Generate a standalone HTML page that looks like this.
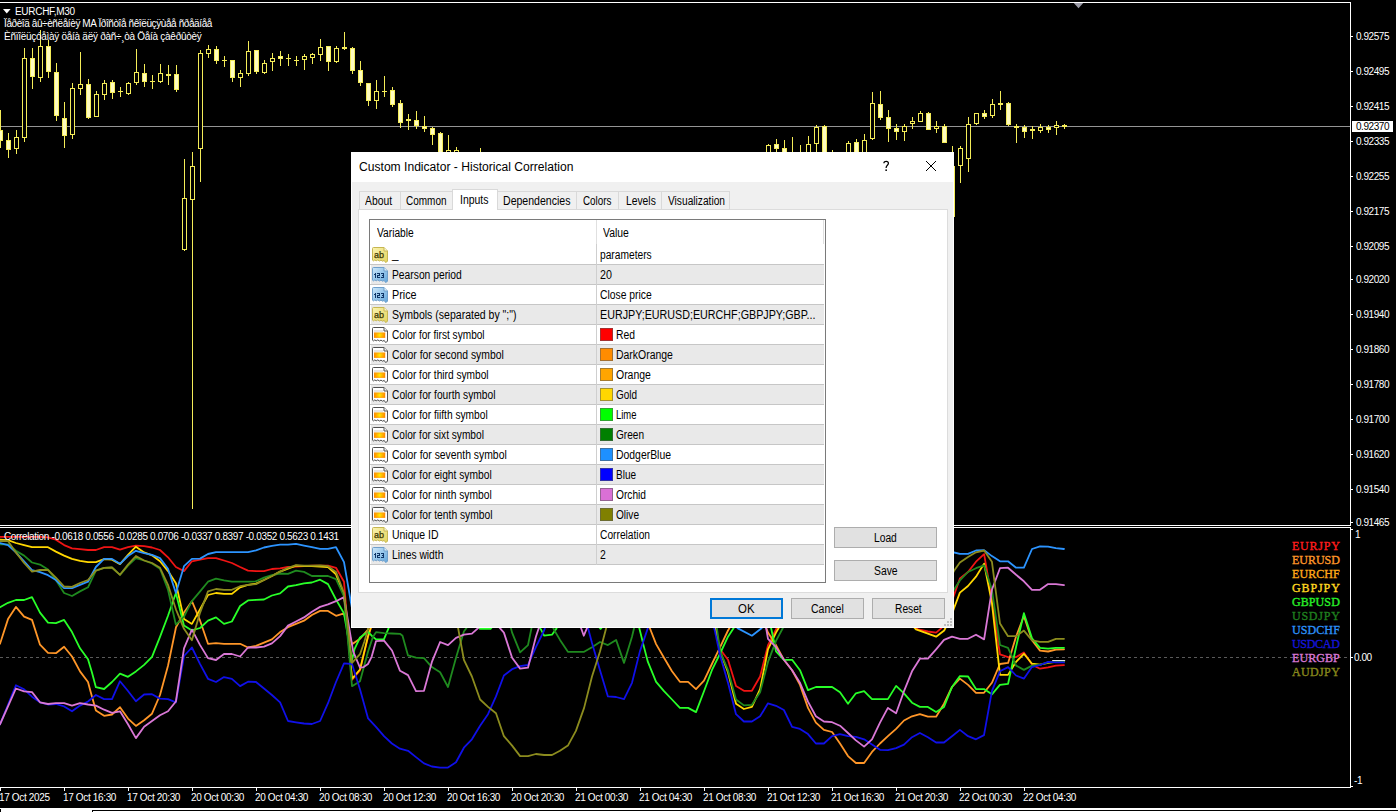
<!DOCTYPE html>
<html><head><meta charset="utf-8"><title>EURCHF,M30</title>
<style>
html,body{margin:0;padding:0;background:#000;}
body{width:1398px;height:812px;overflow:hidden;position:relative;font-family:"Liberation Sans",sans-serif;}
.ax{position:absolute;color:#fff;font-size:10px;line-height:12px;letter-spacing:-0.45px;white-space:nowrap;}
.pbox{position:absolute;width:41px;height:11px;background:#fff;}
.tm{position:absolute;color:#fff;font-size:10px;line-height:12px;letter-spacing:-0.35px;white-space:nowrap;}
.ct{position:absolute;color:#fff;font-size:10px;line-height:12px;letter-spacing:-0.2px;white-space:nowrap;}
.sy{position:absolute;font-family:"Liberation Serif",serif;font-size:12px;line-height:14px;white-space:nowrap;}
.edge{position:absolute;background:#fff;}

#dlg .t{position:absolute;white-space:nowrap;transform-origin:0 50%;display:block;}
#dlg .ic{position:absolute;}

</style></head><body>
<svg width="1398" height="812" viewBox="0 0 1398 812" style="position:absolute;left:0;top:0">
<g shape-rendering="crispEdges">
<rect x="0" y="126" width="1351" height="1" fill="#949494"/>
<rect x="0" y="110" width="1" height="38" fill="#f4ec58"/>
<rect x="-2" y="130" width="5" height="11" fill="#f4ec58"/>
<rect x="-1" y="131" width="3" height="9" fill="#fffcc0"/>
<rect x="8" y="133" width="1" height="25" fill="#f4ec58"/>
<rect x="6" y="140" width="5" height="10" fill="#f4ec58"/>
<rect x="7" y="141" width="3" height="8" fill="#fffcc0"/>
<rect x="16" y="130" width="1" height="24" fill="#f4ec58"/>
<rect x="14" y="137" width="5" height="12" fill="#f4ec58"/>
<rect x="15" y="138" width="3" height="10" fill="#000"/>
<rect x="24" y="48" width="1" height="94" fill="#f4ec58"/>
<rect x="22" y="58" width="5" height="80" fill="#f4ec58"/>
<rect x="23" y="59" width="3" height="78" fill="#000"/>
<rect x="32" y="48" width="1" height="41" fill="#f4ec58"/>
<rect x="30" y="58" width="5" height="19" fill="#f4ec58"/>
<rect x="31" y="59" width="3" height="17" fill="#fffcc0"/>
<rect x="40" y="30" width="1" height="52" fill="#f4ec58"/>
<rect x="38" y="46" width="5" height="32" fill="#f4ec58"/>
<rect x="39" y="47" width="3" height="30" fill="#000"/>
<rect x="48" y="40" width="1" height="38" fill="#f4ec58"/>
<rect x="46" y="46" width="5" height="26" fill="#f4ec58"/>
<rect x="47" y="47" width="3" height="24" fill="#fffcc0"/>
<rect x="56" y="63" width="1" height="58" fill="#f4ec58"/>
<rect x="54" y="72" width="5" height="44" fill="#f4ec58"/>
<rect x="55" y="73" width="3" height="42" fill="#fffcc0"/>
<rect x="64" y="102" width="1" height="46" fill="#f4ec58"/>
<rect x="62" y="118" width="5" height="18" fill="#f4ec58"/>
<rect x="63" y="119" width="3" height="16" fill="#fffcc0"/>
<rect x="72" y="83" width="1" height="56" fill="#f4ec58"/>
<rect x="70" y="88" width="5" height="47" fill="#f4ec58"/>
<rect x="71" y="89" width="3" height="45" fill="#000"/>
<rect x="80" y="52" width="1" height="43" fill="#f4ec58"/>
<rect x="78" y="84" width="5" height="5" fill="#f4ec58"/>
<rect x="79" y="85" width="3" height="3" fill="#000"/>
<rect x="88" y="79" width="1" height="40" fill="#f4ec58"/>
<rect x="86" y="84" width="5" height="34" fill="#f4ec58"/>
<rect x="87" y="85" width="3" height="32" fill="#fffcc0"/>
<rect x="96" y="91" width="1" height="26" fill="#f4ec58"/>
<rect x="94" y="94" width="5" height="23" fill="#f4ec58"/>
<rect x="95" y="95" width="3" height="21" fill="#000"/>
<rect x="104" y="80" width="1" height="20" fill="#f4ec58"/>
<rect x="102" y="83" width="5" height="12" fill="#f4ec58"/>
<rect x="103" y="84" width="3" height="10" fill="#000"/>
<rect x="112" y="80" width="1" height="19" fill="#f4ec58"/>
<rect x="110" y="82" width="5" height="11" fill="#f4ec58"/>
<rect x="111" y="83" width="3" height="9" fill="#fffcc0"/>
<rect x="120" y="87" width="1" height="10" fill="#f4ec58"/>
<rect x="118" y="91" width="5" height="1" fill="#f4ec58"/>
<rect x="128" y="82" width="1" height="13" fill="#f4ec58"/>
<rect x="126" y="83" width="5" height="11" fill="#f4ec58"/>
<rect x="127" y="84" width="3" height="9" fill="#000"/>
<rect x="136" y="49" width="1" height="36" fill="#f4ec58"/>
<rect x="134" y="72" width="5" height="11" fill="#f4ec58"/>
<rect x="135" y="73" width="3" height="9" fill="#000"/>
<rect x="144" y="64" width="1" height="23" fill="#f4ec58"/>
<rect x="142" y="73" width="5" height="9" fill="#f4ec58"/>
<rect x="143" y="74" width="3" height="7" fill="#fffcc0"/>
<rect x="152" y="75" width="1" height="14" fill="#f4ec58"/>
<rect x="150" y="81" width="5" height="1" fill="#f4ec58"/>
<rect x="160" y="64" width="1" height="19" fill="#f4ec58"/>
<rect x="158" y="73" width="5" height="9" fill="#f4ec58"/>
<rect x="159" y="74" width="3" height="7" fill="#000"/>
<rect x="168" y="65" width="1" height="20" fill="#f4ec58"/>
<rect x="166" y="74" width="5" height="2" fill="#f4ec58"/>
<rect x="176" y="65" width="1" height="27" fill="#f4ec58"/>
<rect x="174" y="74" width="5" height="16" fill="#f4ec58"/>
<rect x="175" y="75" width="3" height="14" fill="#fffcc0"/>
<rect x="184" y="159" width="1" height="92" fill="#f4ec58"/>
<rect x="182" y="198" width="5" height="52" fill="#f4ec58"/>
<rect x="183" y="199" width="3" height="50" fill="#000"/>
<rect x="192" y="152" width="1" height="357" fill="#f4ec58"/>
<rect x="190" y="166" width="5" height="34" fill="#f4ec58"/>
<rect x="191" y="167" width="3" height="32" fill="#000"/>
<rect x="200" y="50" width="1" height="132" fill="#f4ec58"/>
<rect x="198" y="53" width="5" height="96" fill="#f4ec58"/>
<rect x="199" y="54" width="3" height="94" fill="#000"/>
<rect x="208" y="45" width="1" height="13" fill="#f4ec58"/>
<rect x="206" y="49" width="5" height="5" fill="#f4ec58"/>
<rect x="207" y="50" width="3" height="3" fill="#000"/>
<rect x="216" y="46" width="1" height="18" fill="#f4ec58"/>
<rect x="214" y="49" width="5" height="12" fill="#f4ec58"/>
<rect x="215" y="50" width="3" height="10" fill="#fffcc0"/>
<rect x="224" y="56" width="1" height="11" fill="#f4ec58"/>
<rect x="222" y="60" width="5" height="1" fill="#f4ec58"/>
<rect x="232" y="60" width="1" height="22" fill="#f4ec58"/>
<rect x="230" y="60" width="5" height="18" fill="#f4ec58"/>
<rect x="231" y="61" width="3" height="16" fill="#fffcc0"/>
<rect x="240" y="70" width="1" height="17" fill="#f4ec58"/>
<rect x="238" y="73" width="5" height="5" fill="#f4ec58"/>
<rect x="239" y="74" width="3" height="3" fill="#000"/>
<rect x="248" y="41" width="1" height="35" fill="#f4ec58"/>
<rect x="246" y="51" width="5" height="23" fill="#f4ec58"/>
<rect x="247" y="52" width="3" height="21" fill="#000"/>
<rect x="256" y="50" width="1" height="24" fill="#f4ec58"/>
<rect x="254" y="50" width="5" height="22" fill="#f4ec58"/>
<rect x="255" y="51" width="3" height="20" fill="#fffcc0"/>
<rect x="264" y="60" width="1" height="14" fill="#f4ec58"/>
<rect x="262" y="63" width="5" height="10" fill="#f4ec58"/>
<rect x="263" y="64" width="3" height="8" fill="#000"/>
<rect x="272" y="53" width="1" height="18" fill="#f4ec58"/>
<rect x="270" y="58" width="5" height="4" fill="#f4ec58"/>
<rect x="271" y="59" width="3" height="2" fill="#000"/>
<rect x="280" y="51" width="1" height="15" fill="#f4ec58"/>
<rect x="278" y="56" width="5" height="3" fill="#f4ec58"/>
<rect x="279" y="57" width="3" height="1" fill="#fffcc0"/>
<rect x="288" y="54" width="1" height="12" fill="#f4ec58"/>
<rect x="286" y="58" width="5" height="1" fill="#f4ec58"/>
<rect x="296" y="56" width="1" height="10" fill="#f4ec58"/>
<rect x="294" y="60" width="5" height="1" fill="#f4ec58"/>
<rect x="304" y="54" width="1" height="16" fill="#f4ec58"/>
<rect x="302" y="56" width="5" height="4" fill="#f4ec58"/>
<rect x="303" y="57" width="3" height="2" fill="#000"/>
<rect x="312" y="53" width="1" height="11" fill="#f4ec58"/>
<rect x="310" y="54" width="5" height="4" fill="#f4ec58"/>
<rect x="311" y="55" width="3" height="2" fill="#000"/>
<rect x="320" y="39" width="1" height="22" fill="#f4ec58"/>
<rect x="318" y="47" width="5" height="8" fill="#f4ec58"/>
<rect x="319" y="48" width="3" height="6" fill="#000"/>
<rect x="328" y="46" width="1" height="25" fill="#f4ec58"/>
<rect x="326" y="46" width="5" height="16" fill="#f4ec58"/>
<rect x="327" y="47" width="3" height="14" fill="#fffcc0"/>
<rect x="336" y="46" width="1" height="17" fill="#f4ec58"/>
<rect x="334" y="48" width="5" height="14" fill="#f4ec58"/>
<rect x="335" y="49" width="3" height="12" fill="#000"/>
<rect x="344" y="32" width="1" height="18" fill="#f4ec58"/>
<rect x="342" y="47" width="5" height="2" fill="#f4ec58"/>
<rect x="352" y="47" width="1" height="27" fill="#f4ec58"/>
<rect x="350" y="48" width="5" height="23" fill="#f4ec58"/>
<rect x="351" y="49" width="3" height="21" fill="#fffcc0"/>
<rect x="360" y="61" width="1" height="25" fill="#f4ec58"/>
<rect x="358" y="70" width="5" height="13" fill="#f4ec58"/>
<rect x="359" y="71" width="3" height="11" fill="#fffcc0"/>
<rect x="368" y="83" width="1" height="23" fill="#f4ec58"/>
<rect x="366" y="83" width="5" height="18" fill="#f4ec58"/>
<rect x="367" y="84" width="3" height="16" fill="#fffcc0"/>
<rect x="376" y="80" width="1" height="29" fill="#f4ec58"/>
<rect x="374" y="91" width="5" height="10" fill="#f4ec58"/>
<rect x="375" y="92" width="3" height="8" fill="#000"/>
<rect x="384" y="76" width="1" height="21" fill="#f4ec58"/>
<rect x="382" y="91" width="5" height="1" fill="#f4ec58"/>
<rect x="392" y="87" width="1" height="20" fill="#f4ec58"/>
<rect x="390" y="90" width="5" height="15" fill="#f4ec58"/>
<rect x="391" y="91" width="3" height="13" fill="#fffcc0"/>
<rect x="400" y="100" width="1" height="28" fill="#f4ec58"/>
<rect x="398" y="103" width="5" height="20" fill="#f4ec58"/>
<rect x="399" y="104" width="3" height="18" fill="#fffcc0"/>
<rect x="408" y="114" width="1" height="16" fill="#f4ec58"/>
<rect x="406" y="119" width="5" height="2" fill="#f4ec58"/>
<rect x="416" y="111" width="1" height="18" fill="#f4ec58"/>
<rect x="414" y="120" width="5" height="6" fill="#f4ec58"/>
<rect x="415" y="121" width="3" height="4" fill="#fffcc0"/>
<rect x="424" y="116" width="1" height="16" fill="#f4ec58"/>
<rect x="422" y="126" width="5" height="3" fill="#f4ec58"/>
<rect x="423" y="127" width="3" height="1" fill="#fffcc0"/>
<rect x="432" y="127" width="1" height="18" fill="#f4ec58"/>
<rect x="430" y="128" width="5" height="7" fill="#f4ec58"/>
<rect x="431" y="129" width="3" height="5" fill="#fffcc0"/>
<rect x="440" y="132" width="1" height="43" fill="#f4ec58"/>
<rect x="438" y="133" width="5" height="37" fill="#f4ec58"/>
<rect x="439" y="134" width="3" height="35" fill="#fffcc0"/>
<rect x="448" y="135" width="1" height="40" fill="#f4ec58"/>
<rect x="446" y="150" width="5" height="20" fill="#f4ec58"/>
<rect x="447" y="151" width="3" height="18" fill="#000"/>
<rect x="456" y="147" width="1" height="28" fill="#f4ec58"/>
<rect x="454" y="150" width="5" height="20" fill="#f4ec58"/>
<rect x="455" y="151" width="3" height="18" fill="#000"/>
<rect x="480" y="148" width="1" height="27" fill="#f4ec58"/>
<rect x="478" y="160" width="5" height="10" fill="#f4ec58"/>
<rect x="479" y="161" width="3" height="8" fill="#000"/>
<rect x="768" y="144" width="1" height="31" fill="#f4ec58"/>
<rect x="766" y="145" width="5" height="25" fill="#f4ec58"/>
<rect x="767" y="146" width="3" height="23" fill="#000"/>
<rect x="776" y="139" width="1" height="13" fill="#f4ec58"/>
<rect x="774" y="144" width="5" height="5" fill="#f4ec58"/>
<rect x="775" y="145" width="3" height="3" fill="#fffcc0"/>
<rect x="784" y="140" width="1" height="35" fill="#f4ec58"/>
<rect x="782" y="148" width="5" height="22" fill="#f4ec58"/>
<rect x="783" y="149" width="3" height="20" fill="#fffcc0"/>
<rect x="792" y="137" width="1" height="38" fill="#f4ec58"/>
<rect x="790" y="160" width="5" height="10" fill="#f4ec58"/>
<rect x="791" y="161" width="3" height="8" fill="#000"/>
<rect x="800" y="145" width="1" height="30" fill="#f4ec58"/>
<rect x="798" y="160" width="5" height="10" fill="#f4ec58"/>
<rect x="799" y="161" width="3" height="8" fill="#000"/>
<rect x="808" y="136" width="1" height="39" fill="#f4ec58"/>
<rect x="806" y="144" width="5" height="26" fill="#f4ec58"/>
<rect x="807" y="145" width="3" height="24" fill="#000"/>
<rect x="816" y="125" width="1" height="27" fill="#f4ec58"/>
<rect x="814" y="127" width="5" height="17" fill="#f4ec58"/>
<rect x="815" y="128" width="3" height="15" fill="#000"/>
<rect x="824" y="125" width="1" height="50" fill="#f4ec58"/>
<rect x="822" y="126" width="5" height="44" fill="#f4ec58"/>
<rect x="823" y="127" width="3" height="42" fill="#fffcc0"/>
<rect x="832" y="150" width="1" height="25" fill="#f4ec58"/>
<rect x="830" y="160" width="5" height="10" fill="#f4ec58"/>
<rect x="831" y="161" width="3" height="8" fill="#000"/>
<rect x="848" y="141" width="1" height="34" fill="#f4ec58"/>
<rect x="846" y="143" width="5" height="27" fill="#f4ec58"/>
<rect x="847" y="144" width="3" height="25" fill="#000"/>
<rect x="856" y="139" width="1" height="36" fill="#f4ec58"/>
<rect x="854" y="142" width="5" height="28" fill="#f4ec58"/>
<rect x="855" y="143" width="3" height="26" fill="#fffcc0"/>
<rect x="864" y="134" width="1" height="41" fill="#f4ec58"/>
<rect x="862" y="140" width="5" height="30" fill="#f4ec58"/>
<rect x="863" y="141" width="3" height="28" fill="#000"/>
<rect x="872" y="92" width="1" height="48" fill="#f4ec58"/>
<rect x="870" y="103" width="5" height="36" fill="#f4ec58"/>
<rect x="871" y="104" width="3" height="34" fill="#000"/>
<rect x="880" y="91" width="1" height="29" fill="#f4ec58"/>
<rect x="878" y="104" width="5" height="14" fill="#f4ec58"/>
<rect x="879" y="105" width="3" height="12" fill="#fffcc0"/>
<rect x="888" y="110" width="1" height="32" fill="#f4ec58"/>
<rect x="886" y="117" width="5" height="12" fill="#f4ec58"/>
<rect x="887" y="118" width="3" height="10" fill="#fffcc0"/>
<rect x="896" y="124" width="1" height="16" fill="#f4ec58"/>
<rect x="894" y="128" width="5" height="4" fill="#f4ec58"/>
<rect x="895" y="129" width="3" height="2" fill="#fffcc0"/>
<rect x="904" y="124" width="1" height="17" fill="#f4ec58"/>
<rect x="902" y="126" width="5" height="6" fill="#f4ec58"/>
<rect x="903" y="127" width="3" height="4" fill="#000"/>
<rect x="912" y="117" width="1" height="12" fill="#f4ec58"/>
<rect x="910" y="121" width="5" height="3" fill="#f4ec58"/>
<rect x="911" y="122" width="3" height="1" fill="#000"/>
<rect x="920" y="111" width="1" height="11" fill="#f4ec58"/>
<rect x="918" y="113" width="5" height="9" fill="#f4ec58"/>
<rect x="919" y="114" width="3" height="7" fill="#000"/>
<rect x="928" y="112" width="1" height="18" fill="#f4ec58"/>
<rect x="926" y="113" width="5" height="17" fill="#f4ec58"/>
<rect x="927" y="114" width="3" height="15" fill="#fffcc0"/>
<rect x="936" y="121" width="1" height="12" fill="#f4ec58"/>
<rect x="934" y="126" width="5" height="3" fill="#f4ec58"/>
<rect x="935" y="127" width="3" height="1" fill="#000"/>
<rect x="944" y="124" width="1" height="19" fill="#f4ec58"/>
<rect x="942" y="126" width="5" height="17" fill="#f4ec58"/>
<rect x="943" y="127" width="3" height="15" fill="#fffcc0"/>
<rect x="952" y="146" width="1" height="84" fill="#f4ec58"/>
<rect x="950" y="166" width="5" height="51" fill="#f4ec58"/>
<rect x="951" y="167" width="3" height="49" fill="#000"/>
<rect x="960" y="146" width="1" height="37" fill="#f4ec58"/>
<rect x="958" y="148" width="5" height="18" fill="#f4ec58"/>
<rect x="959" y="149" width="3" height="16" fill="#000"/>
<rect x="968" y="117" width="1" height="55" fill="#f4ec58"/>
<rect x="966" y="124" width="5" height="35" fill="#f4ec58"/>
<rect x="967" y="125" width="3" height="33" fill="#000"/>
<rect x="976" y="113" width="1" height="12" fill="#f4ec58"/>
<rect x="974" y="113" width="5" height="11" fill="#f4ec58"/>
<rect x="975" y="114" width="3" height="9" fill="#000"/>
<rect x="984" y="110" width="1" height="9" fill="#f4ec58"/>
<rect x="982" y="113" width="5" height="4" fill="#f4ec58"/>
<rect x="983" y="114" width="3" height="2" fill="#fffcc0"/>
<rect x="992" y="99" width="1" height="19" fill="#f4ec58"/>
<rect x="990" y="104" width="5" height="12" fill="#f4ec58"/>
<rect x="991" y="105" width="3" height="10" fill="#000"/>
<rect x="1000" y="91" width="1" height="19" fill="#f4ec58"/>
<rect x="998" y="103" width="5" height="2" fill="#f4ec58"/>
<rect x="1008" y="102" width="1" height="24" fill="#f4ec58"/>
<rect x="1006" y="103" width="5" height="22" fill="#f4ec58"/>
<rect x="1007" y="104" width="3" height="20" fill="#fffcc0"/>
<rect x="1016" y="124" width="1" height="19" fill="#f4ec58"/>
<rect x="1014" y="126" width="5" height="2" fill="#f4ec58"/>
<rect x="1024" y="125" width="1" height="13" fill="#f4ec58"/>
<rect x="1022" y="127" width="5" height="5" fill="#f4ec58"/>
<rect x="1023" y="128" width="3" height="3" fill="#fffcc0"/>
<rect x="1032" y="126" width="1" height="13" fill="#f4ec58"/>
<rect x="1030" y="129" width="5" height="2" fill="#f4ec58"/>
<rect x="1040" y="124" width="1" height="9" fill="#f4ec58"/>
<rect x="1038" y="127" width="5" height="4" fill="#f4ec58"/>
<rect x="1039" y="128" width="3" height="2" fill="#000"/>
<rect x="1048" y="125" width="1" height="8" fill="#f4ec58"/>
<rect x="1046" y="127" width="5" height="3" fill="#f4ec58"/>
<rect x="1047" y="128" width="3" height="1" fill="#fffcc0"/>
<rect x="1056" y="121" width="1" height="14" fill="#f4ec58"/>
<rect x="1054" y="125" width="5" height="3" fill="#f4ec58"/>
<rect x="1055" y="126" width="3" height="1" fill="#000"/>
<rect x="1064" y="124" width="1" height="5" fill="#f4ec58"/>
<rect x="1062" y="125" width="5" height="2" fill="#f4ec58"/>
<rect x="0" y="2" width="1351" height="1" fill="#fff"/>
<rect x="1350" y="2" width="1" height="524" fill="#fff"/><rect x="1350" y="527" width="1" height="261" fill="#fff"/>
<rect x="0" y="525" width="1351" height="1" fill="#fff"/>
<rect x="0" y="527" width="1351" height="1" fill="#fff"/>
<rect x="0" y="787" width="1351" height="1" fill="#fff"/>
<rect x="1351" y="36" width="2" height="1" fill="#fff"/>
<rect x="1351" y="71" width="2" height="1" fill="#fff"/>
<rect x="1351" y="106" width="2" height="1" fill="#fff"/>
<rect x="1351" y="141" width="2" height="1" fill="#fff"/>
<rect x="1351" y="176" width="2" height="1" fill="#fff"/>
<rect x="1351" y="211" width="2" height="1" fill="#fff"/>
<rect x="1351" y="246" width="2" height="1" fill="#fff"/>
<rect x="1351" y="279" width="2" height="1" fill="#fff"/>
<rect x="1351" y="314" width="2" height="1" fill="#fff"/>
<rect x="1351" y="349" width="2" height="1" fill="#fff"/>
<rect x="1351" y="384" width="2" height="1" fill="#fff"/>
<rect x="1351" y="419" width="2" height="1" fill="#fff"/>
<rect x="1351" y="454" width="2" height="1" fill="#fff"/>
<rect x="1351" y="489" width="2" height="1" fill="#fff"/>
<rect x="1351" y="522" width="2" height="1" fill="#fff"/>
<rect x="1351" y="529" width="2" height="1" fill="#fff"/>
<rect x="1351" y="657" width="2" height="1" fill="#fff"/>
<rect x="1351" y="786" width="2" height="1" fill="#fff"/>
<rect x="0" y="788" width="1" height="3" fill="#fff"/>
<rect x="64" y="788" width="1" height="3" fill="#fff"/>
<rect x="128" y="788" width="1" height="3" fill="#fff"/>
<rect x="192" y="788" width="1" height="3" fill="#fff"/>
<rect x="256" y="788" width="1" height="3" fill="#fff"/>
<rect x="320" y="788" width="1" height="3" fill="#fff"/>
<rect x="384" y="788" width="1" height="3" fill="#fff"/>
<rect x="448" y="788" width="1" height="3" fill="#fff"/>
<rect x="512" y="788" width="1" height="3" fill="#fff"/>
<rect x="576" y="788" width="1" height="3" fill="#fff"/>
<rect x="640" y="788" width="1" height="3" fill="#fff"/>
<rect x="704" y="788" width="1" height="3" fill="#fff"/>
<rect x="768" y="788" width="1" height="3" fill="#fff"/>
<rect x="832" y="788" width="1" height="3" fill="#fff"/>
<rect x="896" y="788" width="1" height="3" fill="#fff"/>
<rect x="960" y="788" width="1" height="3" fill="#fff"/>
<rect x="1024" y="788" width="1" height="3" fill="#fff"/>
</g>
<line x1="0" y1="657.5" x2="1350" y2="657.5" stroke="#5a5a5a" stroke-width="1" stroke-dasharray="3,3" shape-rendering="crispEdges"/>
<path d="M1073.8 3 L1083.2 3 L1078.5 8.2 Z" fill="#9a9aa6"/>
<clipPath id="sw"><rect x="0" y="528" width="1350" height="259"/></clipPath>
<g clip-path="url(#sw)" fill="none" stroke-width="1.8" stroke-linejoin="round" stroke-linecap="round">
<polyline points="0.0,536.9 8.0,536.9 15.9,536.9 24.1,536.9 32.0,536.9 40.0,536.9 48.0,537.4 55.9,539.7 64.1,545.1 72.0,548.3 80.0,549.1 88.0,550.0 95.9,550.0 104.1,547.2 112.0,547.2 120.0,549.6 128.0,547.2 135.9,545.6 144.1,546.2 152.0,547.5 160.0,550.0 168.0,557.3 175.9,567.0 184.0,571.1 191.9,561.3 200.1,559.7 208.0,558.1 216.0,558.1 224.0,560.5 231.9,563.0 240.1,567.0 248.0,570.6 256.0,571.1 264.0,571.1 271.9,569.0 280.1,568.3 288.0,567.0 296.0,566.7 304.0,566.2 311.9,565.7 320.1,565.7 328.0,565.7 336.0,567.8 344.0,581.7 352.0,680.0 360.0,670.4 368.0,636.9 376.0,612.3" stroke="#f01414"/>
<polyline points="711.9,607.4 715.9,628.0 720.1,649.3 728.0,659.8 736.0,685.9 743.9,690.8 751.9,690.8 760.1,676.5 768.0,645.1 776.0,629.4 783.9,613.7" stroke="#f01414"/>
<polyline points="912.0,624.2 918.1,629.4 927.9,631.5 936.1,632.6 941.1,628.4 944.0,624.2" stroke="#f01414"/>
<polyline points="952.0,601.0 953.9,595.4 959.9,578.5 968.0,572.0 976.0,561.7 984.1,554.2 991.9,599.1 1000.0,654.3 1008.0,657.1 1016.1,657.1 1023.9,652.5 1032.0,664.6 1040.0,668.7 1048.1,667.4 1055.9,665.6 1064.0,665.2" stroke="#f01414"/>
<polyline points="0.0,643.8 8.0,619.1 15.9,606.9 24.1,616.6 32.0,619.9 40.0,644.7 48.0,652.9 55.9,653.2 64.1,646.7 72.0,656.5 80.0,671.4 88.0,682.0 91.1,693.4 95.9,710.5 104.1,715.8 112.0,714.5 120.0,707.2 128.0,718.6 135.9,725.9 144.1,720.2 152.0,713.7 160.0,695.0 168.0,665.8 176.0,627.2 184.0,612.6 191.9,601.2 200.1,620.7 208.0,643.8 216.0,643.1 224.0,643.8 231.9,643.8 240.1,643.8 248.0,647.5 256.0,645.9 264.0,642.6 271.9,639.4 280.1,632.1 288.0,627.2 296.0,623.9 304.0,620.7 311.9,615.0 320.1,610.9 328.0,610.9 336.0,615.8 344.0,613.4 352.0,644.3 360.0,638.8 368.0,629.5 372.9,612.3" stroke="#ff9628"/>
<polyline points="647.7,622.1 649.8,628.0 656.1,644.1 664.0,657.7 672.0,671.3 679.9,681.8 688.1,681.8 696.0,689.1 704.0,680.7 711.9,664.0 720.1,647.2 728.0,630.5 729.5,628.0 731.6,622.1" stroke="#ff9628"/>
<polyline points="764.0,622.1 768.0,632.6 776.0,645.1 783.9,659.8 792.1,670.2 800.0,684.9 808.0,707.9 815.9,722.6 823.9,729.9 832.1,732.0 840.0,743.5 848.0,756.1 855.9,763.0 864.1,763.0 872.0,751.9 880.0,743.5 887.9,736.2 896.1,728.9 904.0,720.5 912.0,716.3 919.9,714.2 927.9,716.7 936.1,716.7 944.0,703.7 952.0,687.0 959.9,678.6 968.1,684.9 976.0,692.8 984.0,692.8 991.9,682.8 999.9,664.0 1008.1,662.9 1016.0,636.7 1023.9,616.0 1032.0,640.3 1040.0,650.6 1048.1,651.5 1055.9,649.7 1064.0,649.3" stroke="#ff9628"/>
<polyline points="0.0,539.7 8.0,540.2 15.9,543.0 24.1,545.1 32.0,547.2 40.0,547.2 48.0,547.2 55.9,551.6 64.1,555.6 72.0,558.9 80.0,560.8 88.0,562.1 95.9,562.1 104.1,559.2 112.0,559.7 120.0,564.1 128.0,554.8 135.9,546.7 144.1,552.4 152.0,555.3 160.0,561.3 168.0,571.1 175.9,583.3 184.0,619.1 191.9,623.9 200.1,609.3 208.0,595.0 216.0,593.0 224.0,593.9 231.9,593.9 240.1,587.3 248.0,584.9 256.0,583.6 264.0,580.0 271.9,576.0 280.1,571.6 288.0,568.7 296.0,565.7 304.0,566.2 311.9,566.2 320.1,566.7 328.0,567.0 336.0,574.3 344.0,594.7 352.0,678.8 360.0,669.5 368.0,636.3 376.0,612.3" stroke="#ffd700"/>
<polyline points="711.9,609.5 715.3,628.0 720.1,651.4 728.0,672.3 736.0,703.7 743.9,709.0 751.9,706.9 760.1,689.1 768.0,649.3 776.0,632.6 778.7,628.0 783.9,615.8" stroke="#ffd700"/>
<polyline points="912.0,625.2 916.0,629.4 927.9,633.6 936.1,636.7 944.2,630.5 947.4,624.2" stroke="#ffd700"/>
<polyline points="952.0,614.1 953.9,608.5 959.9,592.6 968.0,586.0 976.0,576.7 984.1,563.6 991.9,602.9 1000.0,674.9 1008.0,674.9 1016.1,661.8 1023.9,653.8 1032.0,663.7 1040.0,664.6 1048.1,662.8 1055.9,661.8 1064.0,661.3" stroke="#ffd700"/>
<polyline points="0.0,607.3 8.0,602.8 15.9,600.0 24.1,600.0 32.0,597.1 40.0,612.6 48.0,622.6 55.9,623.1 64.1,619.9 72.0,632.1 80.0,648.3 88.0,659.3 91.9,672.3 95.9,687.2 104.1,689.0 112.0,682.0 120.0,673.6 128.0,676.8 135.9,671.4 144.1,664.9 152.0,656.8 160.0,636.9 168.0,615.8 175.9,593.0 184.0,625.6 191.9,630.4 200.1,628.0 208.0,620.7 216.0,617.4 224.0,623.9 231.9,621.5 240.1,606.0 248.0,600.4 256.0,599.9 264.0,599.5 271.9,595.5 280.1,593.4 288.0,586.5 296.0,585.2 304.0,583.3 311.9,582.5 320.1,579.7 328.0,584.1 336.0,599.5 344.0,613.4 352.0,660.3 354.5,649.2 360.0,637.5 368.0,631.8 371.7,635.7 376.0,639.4 384.0,639.1 388.3,628.9 390.2,624.6" stroke="#28ff28"/>
<polyline points="478.0,626.3 480.1,628.8 490.5,628.8 492.6,626.3" stroke="#28ff28"/>
<polyline points="538.8,626.3 540.9,629.4 544.1,635.7 552.0,634.7 556.6,628.4" stroke="#28ff28"/>
<polyline points="598.5,626.3 600.6,628.8 602.7,626.3" stroke="#28ff28"/>
<polyline points="638.3,624.2 639.9,630.5 643.5,645.1 647.9,661.9 656.1,681.8 664.0,691.2 672.0,699.5 679.9,707.9 688.1,707.9 696.0,712.1 704.0,691.2 711.9,670.2 720.1,653.5 728.0,636.7 733.7,628.0 735.8,624.2" stroke="#28ff28"/>
<polyline points="770.3,624.2 776.0,651.4 783.9,659.8 792.1,659.8 800.0,670.2 808.0,690.1 815.9,687.0 823.9,687.0 832.1,687.0 840.0,692.2 848.0,703.7 855.9,693.3 864.1,691.2 872.0,699.1 880.0,699.1 887.9,699.1 896.1,685.9 904.0,693.3 912.0,702.7 919.9,706.9 927.9,706.9 936.1,712.1 944.0,706.9 952.0,687.0 959.9,676.1 968.1,676.5 976.0,689.1 984.0,689.1 991.9,694.3 999.9,684.9 1008.1,683.8 1016.0,647.2 1023.9,613.2 1032.0,638.4 1040.0,647.8 1048.1,648.7 1055.9,647.8 1064.0,647.8" stroke="#28ff28"/>
<polyline points="0.0,544.3 8.0,544.3 15.9,550.8 24.1,555.6 32.0,562.5 40.0,564.6 48.0,569.5 55.9,580.0 64.1,593.0 72.0,596.0 80.0,591.4 88.0,587.3 95.9,570.6 104.1,567.8 112.0,567.5 120.0,574.8 128.0,565.7 135.9,558.1 144.1,560.5 152.0,563.4 160.0,568.7 168.0,589.8 175.9,624.7 184.0,616.6 191.9,601.2 200.1,591.4 208.0,581.7 216.0,578.7 224.0,580.4 231.9,581.7 240.1,581.7 248.0,581.7 256.0,581.3 264.0,577.6 271.9,575.2 280.1,573.5 288.0,573.9 296.0,570.6 304.0,571.9 311.9,576.0 320.1,576.0 328.0,576.0 336.0,579.2 344.0,596.3 352.0,686.2 360.0,681.2 368.0,651.7 372.9,636.9 376.0,632.2 384.0,633.2 392.0,633.5 400.0,633.8 402.5,635.7 408.0,655.4 416.0,657.7 424.0,658.1 431.9,667.1 440.1,672.3 448.0,687.0 456.0,657.7 463.9,631.5 466.5,628.0 468.6,622.1" stroke="#1f8a1f"/>
<polyline points="509.4,622.1 512.1,632.6 520.1,652.4 528.0,645.1 531.5,628.0" stroke="#1f8a1f"/>
<polyline points="551.4,624.2 554.5,630.5 560.0,639.9 567.9,651.8 575.9,651.8 584.1,651.8 592.0,647.2 600.0,642.0 607.9,645.1 616.1,639.9 624.0,662.9 632.0,636.7 634.1,628.0" stroke="#1f8a1f"/>
<polyline points="713.8,611.6 716.9,628.0 720.1,651.4 728.0,670.2 736.0,699.5 743.9,705.4 751.9,704.8 760.1,692.2 768.0,661.9 776.0,640.9 782.9,628.0 786.0,620.0" stroke="#1f8a1f"/>
<polyline points="952.0,593.5 953.9,589.8 959.9,580.4 968.0,572.0 976.0,568.2 984.1,565.4 991.9,589.8 1000.0,645.0 1008.0,647.8 1016.1,665.6 1023.9,669.9 1032.0,665.6 1040.0,664.6 1048.1,662.4 1055.9,661.8 1064.0,661.8" stroke="#1f8a1f"/>
<polyline points="0.0,543.0 8.0,545.1 15.9,552.4 24.1,561.3 32.0,570.0 40.0,572.2 48.0,575.2 55.9,580.0 64.1,588.2 72.0,588.2 80.0,584.9 88.0,581.7 95.9,567.0 104.1,558.9 112.0,558.9 120.0,563.8 128.0,556.0 135.9,550.8 144.1,553.2 152.0,554.8 160.0,558.1 168.0,568.7 175.9,593.0 184.0,566.2 191.9,558.9 200.1,558.6 208.0,554.0 216.0,552.1 224.0,552.1 231.9,552.1 240.1,552.1 248.0,552.1 256.0,550.4 264.0,547.5 271.9,545.9 280.1,544.7 288.0,544.7 296.0,543.9 304.0,545.6 311.9,547.2 320.1,548.8 328.0,548.8 336.0,547.2 344.0,562.1 351.0,602.8 354.0,619.1" stroke="#2c94ff"/>
<polyline points="733.7,624.2 737.9,628.4 751.9,635.7 760.9,628.8 765.1,624.2" stroke="#2c94ff"/>
<polyline points="952.0,552.0 959.9,553.8 968.0,553.8 976.0,550.5 984.1,550.1 991.9,556.1 1000.0,561.3 1008.0,561.3 1016.1,567.7 1023.9,567.7 1032.0,549.0 1040.0,546.3 1048.1,546.7 1055.9,548.2 1064.0,549.0" stroke="#2c94ff"/>
<polyline points="0.0,724.3 8.0,704.8 15.9,685.3 24.1,689.3 32.0,696.7 40.0,702.3 48.0,704.5 55.9,704.0 64.1,706.4 72.0,711.3 80.0,705.6 88.0,701.5 95.9,695.0 104.1,699.1 112.0,699.1 120.0,681.2 128.0,691.0 135.9,701.2 144.1,694.5 152.0,694.2 160.0,698.6 168.0,699.1 175.9,702.3 184.0,656.0 191.9,647.5 200.1,664.1 208.0,678.8 216.0,682.0 224.0,677.1 231.9,678.8 240.1,686.1 248.0,681.7 256.0,682.0 264.0,688.5 271.9,695.0 280.1,702.3 288.0,721.0 296.0,722.3 304.0,723.5 311.9,724.0 320.1,721.0 328.0,703.2 336.0,682.0 344.0,663.3 352.0,664.0 359.9,689.1 368.1,718.4 376.0,726.8 384.0,736.2 391.9,743.5 399.9,748.7 408.1,750.8 416.0,757.1 424.0,763.4 431.9,766.5 440.1,767.6 448.0,767.6 456.0,762.3 463.9,747.7 471.9,739.3 480.1,725.7 488.0,714.2 496.0,696.4 503.9,675.5 512.1,669.2 520.1,666.1 528.0,665.0 535.9,647.2 544.1,630.5 546.2,624.2" stroke="#1010e8"/>
<polyline points="587.0,624.2 592.0,643.0 600.0,670.2 607.9,696.4 616.1,697.0 624.0,699.1 632.0,682.8 639.9,651.4 647.9,628.0 649.4,622.1" stroke="#1010e8"/>
<polyline points="712.7,622.1 714.8,630.5 720.1,655.6 728.0,682.8 736.0,714.2 743.9,721.5 751.9,721.5 760.1,716.3 768.0,703.3 776.0,705.8 783.9,710.0 792.1,726.8 800.0,728.9 808.0,734.1 815.9,743.5 823.9,743.5 832.1,736.2 840.0,734.1 848.0,736.2 855.9,736.8 864.1,739.3 872.0,744.6 880.0,749.8 887.9,750.2 896.1,748.1 904.0,744.6 912.0,737.2 919.9,733.0 927.9,737.2 936.1,742.5 944.0,742.5 952.0,736.2 959.9,729.9 968.1,736.2 976.0,739.3 984.0,735.1 991.9,691.2 999.9,671.3 1008.1,667.1 1016.0,675.5 1024.0,678.6 1031.9,667.1 1040.1,665.0 1048.1,661.9 1055.9,662.4 1064.0,662.4" stroke="#1010e8"/>
<polyline points="0.0,724.3 8.0,706.4 15.9,688.5 24.1,691.4 32.0,692.1 40.0,702.3 48.0,704.0 55.9,703.2 64.1,703.2 72.0,705.6 80.0,703.2 88.0,704.5 95.9,705.6 104.1,709.7 112.0,712.9 120.0,711.3 128.0,724.3 135.9,738.1 144.1,726.7 152.0,721.0 160.0,715.3 168.0,711.3 175.9,701.5 184.0,648.3 191.9,629.6 200.1,645.1 208.0,658.1 216.0,660.0 224.0,654.0 231.9,654.0 240.1,656.5 248.0,647.5 256.0,647.5 264.0,646.7 271.9,643.4 280.1,636.1 288.0,625.6 296.0,621.5 304.0,617.4 311.9,611.7 320.1,606.9 328.0,604.4 336.0,601.2 344.0,597.1 353.2,651.7 360.0,667.7 363.7,667.1 368.0,664.0 371.7,656.6 376.0,641.2 384.0,640.6 392.0,650.5 400.0,670.8 408.0,675.1 416.0,691.1 424.0,690.8 431.9,661.9 440.1,642.0 448.0,645.1 456.0,637.8 463.9,634.7 471.9,633.6 480.1,626.3 482.2,622.1" stroke="#da78d6"/>
<polyline points="494.7,622.1 503.9,632.6 512.1,657.7 520.1,668.6 528.0,667.7 535.9,636.7 538.8,628.0" stroke="#da78d6"/>
<polyline points="579.7,624.2 583.8,635.7 587.0,628.0" stroke="#da78d6"/>
<polyline points="765.1,622.1 768.0,638.8 776.0,647.2 783.9,659.8 792.1,670.2 800.0,682.8 808.0,701.6 815.9,716.3 823.9,721.5 832.1,722.2 840.0,725.7 848.0,733.0 855.9,740.4 864.1,746.6 872.0,739.3 880.0,722.6 887.9,707.9 896.1,713.2 904.0,691.2 912.0,671.3 919.9,658.7 927.9,658.7 936.1,649.3 944.0,639.9 952.0,636.7 959.9,638.8 968.0,638.8 976.0,634.7 984.1,639.4 991.9,589.8 1000.0,568.2 1008.0,567.7 1016.1,574.8 1023.9,581.3 1032.0,589.8 1040.0,589.8 1048.1,584.1 1055.9,584.1 1064.0,585.1" stroke="#da78d6"/>
<polyline points="0.0,541.0 8.0,541.0 15.9,552.4 24.1,563.0 32.0,571.6 40.0,570.0 48.0,570.0 55.9,577.6 64.1,586.5 72.0,586.9 80.0,583.0 88.0,580.0 95.9,570.6 104.1,567.8 112.0,567.5 120.0,574.8 128.0,564.6 135.9,556.0 144.1,560.5 152.0,563.0 160.0,567.8 168.0,584.9 175.9,609.3 184.0,628.8 191.9,640.2 200.1,612.6 208.0,591.4 216.0,589.0 224.0,589.8 231.9,589.8 240.1,586.2 248.0,584.9 256.0,584.1 264.0,580.0 271.9,576.0 280.1,571.6 288.0,567.8 296.0,565.1 304.0,565.7 311.9,565.7 320.1,565.4 328.0,566.2 336.0,571.9 344.0,593.0 352.0,662.8 360.0,654.2 364.3,641.8 368.0,629.5 372.9,612.3" stroke="#8c8c1e"/>
<polyline points="456.0,624.2 458.1,628.0 463.9,659.8 471.9,676.5 480.1,699.5 488.0,706.9 496.0,713.2 503.9,736.2 512.1,745.6 520.1,756.1 528.0,756.1 535.9,754.0 544.1,755.0 552.0,755.0 560.0,750.8 567.9,745.6 575.9,730.9 584.1,707.9 592.0,676.5 600.0,651.4 606.2,628.0 607.9,622.1" stroke="#8c8c1e"/>
<polyline points="952.0,574.8 953.9,571.0 959.9,562.6 968.0,557.0 976.0,552.3 984.1,550.5 991.9,561.7 1000.0,623.5 1008.0,636.2 1016.1,636.2 1023.9,630.6 1032.0,640.3 1040.0,641.8 1048.1,641.8 1055.9,638.8 1064.0,638.8" stroke="#8c8c1e"/>
<polyline points="1052.6,660.5 1064.7,660.5" stroke="#e6e6e6" stroke-width="1.1"/>
</g>
<path d="M3 9 L10.6 9 L6.8 13.4 Z" fill="#fff"/>
</svg>
<div class="ax" style="left:1356px;top:31px">0.92575</div>
<div class="ax" style="left:1356px;top:66px">0.92495</div>
<div class="ax" style="left:1356px;top:101px">0.92415</div>
<div class="ax" style="left:1356px;top:136px">0.92335</div>
<div class="ax" style="left:1356px;top:171px">0.92255</div>
<div class="ax" style="left:1356px;top:206px">0.92175</div>
<div class="ax" style="left:1356px;top:241px">0.92095</div>
<div class="ax" style="left:1356px;top:274px">0.92020</div>
<div class="ax" style="left:1356px;top:309px">0.91940</div>
<div class="ax" style="left:1356px;top:344px">0.91860</div>
<div class="ax" style="left:1356px;top:379px">0.91780</div>
<div class="ax" style="left:1356px;top:414px">0.91700</div>
<div class="ax" style="left:1356px;top:449px">0.91620</div>
<div class="ax" style="left:1356px;top:484px">0.91540</div>
<div class="ax" style="left:1356px;top:517px">0.91465</div>
<div class="pbox" style="left:1352px;top:121px"></div><div class="ax" style="left:1356px;top:121px;color:#000">0.92370</div>
<div class="ax" style="left:1355px;top:529px">1</div>
<div class="ax" style="left:1354px;top:652px">0.00</div>
<div class="ax" style="left:1354px;top:775px">-1</div>
<div class="tm" style="left:-1px;top:791.5px">17 Oct 2025</div>
<div class="tm" style="left:63px;top:791.5px">17 Oct 16:30</div>
<div class="tm" style="left:127px;top:791.5px">17 Oct 20:30</div>
<div class="tm" style="left:191px;top:791.5px">20 Oct 00:30</div>
<div class="tm" style="left:255px;top:791.5px">20 Oct 04:30</div>
<div class="tm" style="left:319px;top:791.5px">20 Oct 08:30</div>
<div class="tm" style="left:383px;top:791.5px">20 Oct 12:30</div>
<div class="tm" style="left:447px;top:791.5px">20 Oct 16:30</div>
<div class="tm" style="left:511px;top:791.5px">20 Oct 20:30</div>
<div class="tm" style="left:575px;top:791.5px">21 Oct 00:30</div>
<div class="tm" style="left:639px;top:791.5px">21 Oct 04:30</div>
<div class="tm" style="left:703px;top:791.5px">21 Oct 08:30</div>
<div class="tm" style="left:767px;top:791.5px">21 Oct 12:30</div>
<div class="tm" style="left:831px;top:791.5px">21 Oct 16:30</div>
<div class="tm" style="left:895px;top:791.5px">21 Oct 20:30</div>
<div class="tm" style="left:959px;top:791.5px">22 Oct 00:30</div>
<div class="tm" style="left:1023px;top:791.5px">22 Oct 04:30</div>
<div class="ct" id="ct0" style="left:15px;top:5.5px;font-size:10px;letter-spacing:-0.3px">EURCHF,M30</div>
<div class="ct" id="ct1" style="left:4px;top:18px;letter-spacing:-0.4px">&Iuml;&aring;&eth;&egrave;&icirc;&auml; &acirc;&ucirc;&divide;&egrave;&ntilde;&euml;&aring;&iacute;&egrave;&yuml; MA &Iuml;&eth;&icirc;&ntilde;&ograve;&icirc;&aring; &ntilde;&ecirc;&icirc;&euml;&uuml;&ccedil;&yuml;&ugrave;&aring;&aring; &ntilde;&eth;&aring;&auml;&iacute;&aring;&aring;</div>
<div class="ct" id="ct2" style="left:4px;top:31px;letter-spacing:-0.28px">&Egrave;&ntilde;&iuml;&icirc;&euml;&uuml;&ccedil;&oacute;&aring;&igrave;&agrave;&yuml; &ouml;&aring;&iacute;&agrave; &auml;&euml;&yuml; &eth;&agrave;&ntilde;&divide;&cedil;&ograve;&agrave; &Ouml;&aring;&iacute;&agrave; &ccedil;&agrave;&ecirc;&eth;&ucirc;&ograve;&egrave;&yuml;</div>
<div class="ct" id="ct3" style="left:4px;top:531px;letter-spacing:-0.355px">Correlation -0.0618 0.0556 -0.0285 0.0706 -0.0337 0.8397 -0.0352 0.5623 0.1431</div>
<div class="sy" style="left:1292px;top:539px;color:#ff1c1c;letter-spacing:0.76px;-webkit-text-stroke:0.35px #ff1c1c">EURJPY</div>
<div class="sy" style="left:1292px;top:553px;color:#ff9628;letter-spacing:-0.04px;-webkit-text-stroke:0.35px #ff9628">EURUSD</div>
<div class="sy" style="left:1292px;top:567px;color:#ffa818;letter-spacing:0.09px;-webkit-text-stroke:0.35px #ffa818">EURCHF</div>
<div class="sy" style="left:1292px;top:581px;color:#ffd820;letter-spacing:0.89px;-webkit-text-stroke:0.35px #ffd820">GBPJPY</div>
<div class="sy" style="left:1292px;top:595px;color:#28f028;letter-spacing:0.09px;-webkit-text-stroke:0.35px #28f028">GBPUSD</div>
<div class="sy" style="left:1292px;top:609px;color:#1f7f1f;letter-spacing:0.76px;-webkit-text-stroke:0.35px #1f7f1f">USDJPY</div>
<div class="sy" style="left:1292px;top:623px;color:#2c90f8;letter-spacing:0.09px;-webkit-text-stroke:0.35px #2c90f8">USDCHF</div>
<div class="sy" style="left:1292px;top:637px;color:#1414d8;letter-spacing:-0.31px;-webkit-text-stroke:0.35px #1414d8">USDCAD</div>
<div class="sy" style="left:1292px;top:651px;color:#da78d6;letter-spacing:0.09px;-webkit-text-stroke:0.35px #da78d6">EURGBP</div>
<div class="sy" style="left:1292px;top:665px;color:#88881c;letter-spacing:0.36px;-webkit-text-stroke:0.35px #88881c">AUDJPY</div>
<div class="edge" style="left:1396px;top:0;width:2px;height:812px"></div>
<div class="edge" style="left:0;top:808px;width:1398px;height:4px"></div>
<div style="position:absolute;left:92px;top:810px;width:1306px;height:1px;background:#000"></div>
<div style="position:absolute;left:0;top:809px;width:1px;height:3px;background:#000"></div>
<div style="position:absolute;left:92px;top:810px;width:1px;height:2px;background:#000"></div>
<div id="dlg" style="position:absolute;left:351px;top:152px;width:603px;height:476px;background:#f0f0f0;overflow:hidden">
<div style="position:absolute;left:0px;top:0px;width:603px;height:30px;background:#fff"></div>
<span class="t" style="left:8.3px;top:6.5px;font-size:12px;line-height:16px;color:#000;transform:scaleX(1.0083);">Custom Indicator - Historical Correlation</span>
<svg style="position:absolute;left:532px;top:8px" width="7" height="12" viewBox="0 0 7 12"><path d="M0.9 3.2 C0.9 0.6 5.4 0.6 5.4 3.3 C5.4 5.2 3.1 5.4 3.1 7.9" stroke="#000" stroke-width="1.25" fill="none"/><rect x="2.4" y="9.4" width="1.5" height="1.6" fill="#000"/></svg>
<svg style="position:absolute;left:574px;top:8px" width="12" height="12" viewBox="0 0 12 12"><path d="M1 1 L11 11 M11 1 L1 11" stroke="#000" stroke-width="1" fill="none"/></svg>
<div style="position:absolute;left:0px;top:0px;width:1px;height:476px;background:#fff"></div>
<div style="position:absolute;left:602px;top:0px;width:1px;height:476px;background:#fff"></div>
<div style="position:absolute;left:0px;top:475px;width:603px;height:1px;background:#fff"></div>
<div style="position:absolute;left:7px;top:57px;width:590px;height:384px;background:#fff;border:1px solid #dcdcdc;box-sizing:border-box"></div>
<div style="position:absolute;left:8px;top:39px;width:42px;height:19px;background:#f0f0f0;border:1px solid #d9d9d9;box-sizing:border-box"></div>
<span class="t" style="left:14.0px;top:40.0px;font-size:12px;line-height:19px;color:#000;transform:scaleX(0.8610);">About</span>
<div style="position:absolute;left:49px;top:39px;width:53px;height:19px;background:#f0f0f0;border:1px solid #d9d9d9;box-sizing:border-box"></div>
<span class="t" style="left:55.2px;top:40.0px;font-size:12px;line-height:19px;color:#000;transform:scaleX(0.8320);">Common</span>
<div style="position:absolute;left:146px;top:39px;width:80px;height:19px;background:#f0f0f0;border:1px solid #d9d9d9;box-sizing:border-box"></div>
<span class="t" style="left:151.5px;top:40.0px;font-size:12px;line-height:19px;color:#000;transform:scaleX(0.8799);">Dependencies</span>
<div style="position:absolute;left:225px;top:39px;width:43px;height:19px;background:#f0f0f0;border:1px solid #d9d9d9;box-sizing:border-box"></div>
<span class="t" style="left:231.5px;top:40.0px;font-size:12px;line-height:19px;color:#000;transform:scaleX(0.8219);">Colors</span>
<div style="position:absolute;left:267px;top:39px;width:44px;height:19px;background:#f0f0f0;border:1px solid #d9d9d9;box-sizing:border-box"></div>
<span class="t" style="left:274.6px;top:40.0px;font-size:12px;line-height:19px;color:#000;transform:scaleX(0.8591);">Levels</span>
<div style="position:absolute;left:310px;top:39px;width:69px;height:19px;background:#f0f0f0;border:1px solid #d9d9d9;box-sizing:border-box"></div>
<span class="t" style="left:317.0px;top:40.0px;font-size:12px;line-height:19px;color:#000;transform:scaleX(0.8488);">Visualization</span>
<div style="position:absolute;left:101px;top:37px;width:46px;height:21px;background:#fff;border:1px solid #d9d9d9;border-bottom:none;box-sizing:border-box"></div>
<span class="t" style="left:109.0px;top:38.5px;font-size:12px;line-height:19px;color:#000;transform:scaleX(0.8719);">Inputs</span>
<div style="position:absolute;left:18px;top:67px;width:457px;height:364px;background:#fff;border:1px solid #7a7a7a;box-sizing:border-box"></div>
<span class="t" style="left:26.4px;top:70.5px;font-size:12px;line-height:20px;color:#000;transform:scaleX(0.8508);">Variable</span>
<span class="t" style="left:252.4px;top:70.5px;font-size:12px;line-height:20px;color:#000;transform:scaleX(0.8658);">Value</span>
<div style="position:absolute;left:245px;top:68px;width:1px;height:24px;background:#e0e0e0"></div>
<div style="position:absolute;left:472px;top:68px;width:1px;height:24px;background:#e0e0e0"></div>
<div style="position:absolute;left:19px;top:112px;width:454px;height:1px;background:#c6c6c6"></div>
<svg class="ic" style="left:21px;top:95px" width="16" height="16" viewBox="0 0 16 16"><defs><linearGradient id="gy0" x1="0" y1="0" x2="1" y2="1"><stop offset="0" stop-color="#fbf3b0"/><stop offset="1" stop-color="#e3d45c"/></linearGradient></defs><path d="M1.5 .5 H12 L15.5 4 V14.3 L13.6 15.5 L12.2 13.4 L10.6 14.2 L9 13.1 L7.4 14 L5.8 12.9 L4.2 13.8 L2.8 12.9 L1.6 13.9 L.5 13.2 V1.5 Q.5 .5 1.5 .5Z" fill="url(#gy0)" stroke="#c6b652" stroke-width="1"/><path d="M12 .5 V4 H15.5" fill="#fdf8d0" stroke="#c6b652" stroke-width="1"/><text x="7" y="11.2" text-anchor="middle" style="font-family:'Liberation Sans',sans-serif" font-size="9.5" fill="#3a3400" stroke="#3a3400" stroke-width=".25" textLength="10" lengthAdjust="spacingAndGlyphs">ab</text></svg>
<span class="t" style="left:41.4px;top:93.0px;font-size:12px;line-height:19px;color:#000;transform:scaleX(0.9741);">_</span>
<span class="t" style="left:249.0px;top:94.0px;font-size:12px;line-height:19px;color:#000;transform:scaleX(0.8519);">parameters</span>
<div style="position:absolute;left:20px;top:113px;width:453px;height:19px;background:#e9e9e9"></div>
<div style="position:absolute;left:19px;top:132px;width:454px;height:1px;background:#c6c6c6"></div>
<svg class="ic" style="left:21px;top:115px" width="16" height="16" viewBox="0 0 16 16"><defs><linearGradient id="gb1" x1="0" y1="0" x2="1" y2="1"><stop offset="0" stop-color="#cde8fa"/><stop offset="1" stop-color="#62a6dc"/></linearGradient></defs><path d="M1.5 .5 H12 L15.5 4 V14.3 L13.6 15.5 L12.2 13.4 L10.6 14.2 L9 13.1 L7.4 14 L5.8 12.9 L4.2 13.8 L2.8 12.9 L1.6 13.9 L.5 13.2 V1.5 Q.5 .5 1.5 .5Z" fill="url(#gb1)" stroke="#6f9fcb" stroke-width="1"/><path d="M12 .5 V4 H15.5" fill="#e2f1fb" stroke="#6f9fcb" stroke-width="1"/><g fill="#0f3566" shape-rendering="crispEdges"><rect x="3" y="6" width="1" height="1"/><rect x="2" y="7" width="1" height="1"/><rect x="3" y="7" width="1" height="1"/><rect x="3" y="8" width="1" height="1"/><rect x="3" y="9" width="1" height="1"/><rect x="3" y="10" width="1" height="1"/><rect x="5" y="6" width="1" height="1"/><rect x="6" y="6" width="1" height="1"/><rect x="7" y="6" width="1" height="1"/><rect x="7" y="7" width="1" height="1"/><rect x="5" y="8" width="1" height="1"/><rect x="6" y="8" width="1" height="1"/><rect x="7" y="8" width="1" height="1"/><rect x="5" y="9" width="1" height="1"/><rect x="5" y="10" width="1" height="1"/><rect x="6" y="10" width="1" height="1"/><rect x="7" y="10" width="1" height="1"/><rect x="9" y="6" width="1" height="1"/><rect x="10" y="6" width="1" height="1"/><rect x="11" y="6" width="1" height="1"/><rect x="11" y="7" width="1" height="1"/><rect x="10" y="8" width="1" height="1"/><rect x="11" y="8" width="1" height="1"/><rect x="11" y="9" width="1" height="1"/><rect x="9" y="10" width="1" height="1"/><rect x="10" y="10" width="1" height="1"/><rect x="11" y="10" width="1" height="1"/></g></svg>
<span class="t" style="left:41.4px;top:114.0px;font-size:12px;line-height:19px;color:#000;transform:scaleX(0.8577);">Pearson period</span>
<span class="t" style="left:249.0px;top:114.0px;font-size:12px;line-height:19px;color:#000;transform:scaleX(0.8916);">20</span>
<div style="position:absolute;left:19px;top:152px;width:454px;height:1px;background:#c6c6c6"></div>
<svg class="ic" style="left:21px;top:135px" width="16" height="16" viewBox="0 0 16 16"><defs><linearGradient id="gb2" x1="0" y1="0" x2="1" y2="1"><stop offset="0" stop-color="#cde8fa"/><stop offset="1" stop-color="#62a6dc"/></linearGradient></defs><path d="M1.5 .5 H12 L15.5 4 V14.3 L13.6 15.5 L12.2 13.4 L10.6 14.2 L9 13.1 L7.4 14 L5.8 12.9 L4.2 13.8 L2.8 12.9 L1.6 13.9 L.5 13.2 V1.5 Q.5 .5 1.5 .5Z" fill="url(#gb2)" stroke="#6f9fcb" stroke-width="1"/><path d="M12 .5 V4 H15.5" fill="#e2f1fb" stroke="#6f9fcb" stroke-width="1"/><g fill="#0f3566" shape-rendering="crispEdges"><rect x="3" y="6" width="1" height="1"/><rect x="2" y="7" width="1" height="1"/><rect x="3" y="7" width="1" height="1"/><rect x="3" y="8" width="1" height="1"/><rect x="3" y="9" width="1" height="1"/><rect x="3" y="10" width="1" height="1"/><rect x="5" y="6" width="1" height="1"/><rect x="6" y="6" width="1" height="1"/><rect x="7" y="6" width="1" height="1"/><rect x="7" y="7" width="1" height="1"/><rect x="5" y="8" width="1" height="1"/><rect x="6" y="8" width="1" height="1"/><rect x="7" y="8" width="1" height="1"/><rect x="5" y="9" width="1" height="1"/><rect x="5" y="10" width="1" height="1"/><rect x="6" y="10" width="1" height="1"/><rect x="7" y="10" width="1" height="1"/><rect x="9" y="6" width="1" height="1"/><rect x="10" y="6" width="1" height="1"/><rect x="11" y="6" width="1" height="1"/><rect x="11" y="7" width="1" height="1"/><rect x="10" y="8" width="1" height="1"/><rect x="11" y="8" width="1" height="1"/><rect x="11" y="9" width="1" height="1"/><rect x="9" y="10" width="1" height="1"/><rect x="10" y="10" width="1" height="1"/><rect x="11" y="10" width="1" height="1"/></g></svg>
<span class="t" style="left:41.4px;top:134.0px;font-size:12px;line-height:19px;color:#000;transform:scaleX(0.8961);">Price</span>
<span class="t" style="left:249.0px;top:134.0px;font-size:12px;line-height:19px;color:#000;transform:scaleX(0.8614);">Close price</span>
<div style="position:absolute;left:20px;top:153px;width:453px;height:19px;background:#e9e9e9"></div>
<div style="position:absolute;left:19px;top:172px;width:454px;height:1px;background:#c6c6c6"></div>
<svg class="ic" style="left:21px;top:155px" width="16" height="16" viewBox="0 0 16 16"><defs><linearGradient id="gy3" x1="0" y1="0" x2="1" y2="1"><stop offset="0" stop-color="#fbf3b0"/><stop offset="1" stop-color="#e3d45c"/></linearGradient></defs><path d="M1.5 .5 H12 L15.5 4 V14.3 L13.6 15.5 L12.2 13.4 L10.6 14.2 L9 13.1 L7.4 14 L5.8 12.9 L4.2 13.8 L2.8 12.9 L1.6 13.9 L.5 13.2 V1.5 Q.5 .5 1.5 .5Z" fill="url(#gy3)" stroke="#c6b652" stroke-width="1"/><path d="M12 .5 V4 H15.5" fill="#fdf8d0" stroke="#c6b652" stroke-width="1"/><text x="7" y="11.2" text-anchor="middle" style="font-family:'Liberation Sans',sans-serif" font-size="9.5" fill="#3a3400" stroke="#3a3400" stroke-width=".25" textLength="10" lengthAdjust="spacingAndGlyphs">ab</text></svg>
<span class="t" style="left:41.4px;top:154.0px;font-size:12px;line-height:19px;color:#000;transform:scaleX(0.8774);">Symbols (separated by &quot;;&quot;)</span>
<span class="t" style="left:249.0px;top:154.0px;font-size:12px;line-height:19px;color:#000;transform:scaleX(0.8944);">EURJPY;EURUSD;EURCHF;GBPJPY;GBP...</span>
<div style="position:absolute;left:19px;top:192px;width:454px;height:1px;background:#c6c6c6"></div>
<svg class="ic" style="left:21px;top:175px" width="16" height="16" viewBox="0 0 16 16"><defs><linearGradient id="go4" x1="0" y1="0" x2="1" y2="0"><stop offset="0" stop-color="#ff8400"/><stop offset=".5" stop-color="#ffe600"/><stop offset="1" stop-color="#ff8400"/></linearGradient></defs><path d="M1.5 .5 H12 L15.5 4 V14.3 L13.6 15.5 L12.2 13.4 L10.6 14.2 L9 13.1 L7.4 14 L5.8 12.9 L4.2 13.8 L2.8 12.9 L1.6 13.9 L.5 13.2 V1.5 Q.5 .5 1.5 .5Z" fill="#fff" stroke="#505050" stroke-width="1"/><path d="M12 .5 V4 H15.5" fill="#f4f4f4" stroke="#505050" stroke-width="1"/><rect x="2" y="3" width="9" height="2.6" fill="#e4e4e4"/><rect x="2" y="5.6" width="11.2" height="5.2" fill="url(#go4)"/><rect x="2" y="5.6" width="11.2" height="1" fill="#ff9a10" opacity=".6"/><rect x="2" y="9.8" width="11.2" height="1" fill="#ff8a00" opacity=".6"/></svg>
<span class="t" style="left:40.7px;top:174.0px;font-size:12px;line-height:19px;color:#000;transform:scaleX(0.8417);">Color for first symbol</span>
<div style="position:absolute;left:249px;top:176px;width:13px;height:13px;background:#ff0000;border:1px solid rgba(90,90,90,.55);box-sizing:border-box"></div>
<span class="t" style="left:265.0px;top:174.0px;font-size:12px;line-height:19px;color:#000;transform:scaleX(0.8631);">Red</span>
<div style="position:absolute;left:20px;top:193px;width:453px;height:19px;background:#e9e9e9"></div>
<div style="position:absolute;left:19px;top:212px;width:454px;height:1px;background:#c6c6c6"></div>
<svg class="ic" style="left:21px;top:195px" width="16" height="16" viewBox="0 0 16 16"><defs><linearGradient id="go5" x1="0" y1="0" x2="1" y2="0"><stop offset="0" stop-color="#ff8400"/><stop offset=".5" stop-color="#ffe600"/><stop offset="1" stop-color="#ff8400"/></linearGradient></defs><path d="M1.5 .5 H12 L15.5 4 V14.3 L13.6 15.5 L12.2 13.4 L10.6 14.2 L9 13.1 L7.4 14 L5.8 12.9 L4.2 13.8 L2.8 12.9 L1.6 13.9 L.5 13.2 V1.5 Q.5 .5 1.5 .5Z" fill="#fff" stroke="#505050" stroke-width="1"/><path d="M12 .5 V4 H15.5" fill="#f4f4f4" stroke="#505050" stroke-width="1"/><rect x="2" y="3" width="9" height="2.6" fill="#e4e4e4"/><rect x="2" y="5.6" width="11.2" height="5.2" fill="url(#go5)"/><rect x="2" y="5.6" width="11.2" height="1" fill="#ff9a10" opacity=".6"/><rect x="2" y="9.8" width="11.2" height="1" fill="#ff8a00" opacity=".6"/></svg>
<span class="t" style="left:40.7px;top:194.0px;font-size:12px;line-height:19px;color:#000;transform:scaleX(0.8634);">Color for second symbol</span>
<div style="position:absolute;left:249px;top:196px;width:13px;height:13px;background:#ff8c00;border:1px solid rgba(90,90,90,.55);box-sizing:border-box"></div>
<span class="t" style="left:265.0px;top:194.0px;font-size:12px;line-height:19px;color:#000;transform:scaleX(0.8706);">DarkOrange</span>
<div style="position:absolute;left:19px;top:232px;width:454px;height:1px;background:#c6c6c6"></div>
<svg class="ic" style="left:21px;top:215px" width="16" height="16" viewBox="0 0 16 16"><defs><linearGradient id="go6" x1="0" y1="0" x2="1" y2="0"><stop offset="0" stop-color="#ff8400"/><stop offset=".5" stop-color="#ffe600"/><stop offset="1" stop-color="#ff8400"/></linearGradient></defs><path d="M1.5 .5 H12 L15.5 4 V14.3 L13.6 15.5 L12.2 13.4 L10.6 14.2 L9 13.1 L7.4 14 L5.8 12.9 L4.2 13.8 L2.8 12.9 L1.6 13.9 L.5 13.2 V1.5 Q.5 .5 1.5 .5Z" fill="#fff" stroke="#505050" stroke-width="1"/><path d="M12 .5 V4 H15.5" fill="#f4f4f4" stroke="#505050" stroke-width="1"/><rect x="2" y="3" width="9" height="2.6" fill="#e4e4e4"/><rect x="2" y="5.6" width="11.2" height="5.2" fill="url(#go6)"/><rect x="2" y="5.6" width="11.2" height="1" fill="#ff9a10" opacity=".6"/><rect x="2" y="9.8" width="11.2" height="1" fill="#ff8a00" opacity=".6"/></svg>
<span class="t" style="left:40.7px;top:214.0px;font-size:12px;line-height:19px;color:#000;transform:scaleX(0.8472);">Color for third symbol</span>
<div style="position:absolute;left:249px;top:216px;width:13px;height:13px;background:#ffa500;border:1px solid rgba(90,90,90,.55);box-sizing:border-box"></div>
<span class="t" style="left:265.0px;top:214.0px;font-size:12px;line-height:19px;color:#000;transform:scaleX(0.8720);">Orange</span>
<div style="position:absolute;left:20px;top:233px;width:453px;height:19px;background:#e9e9e9"></div>
<div style="position:absolute;left:19px;top:252px;width:454px;height:1px;background:#c6c6c6"></div>
<svg class="ic" style="left:21px;top:235px" width="16" height="16" viewBox="0 0 16 16"><defs><linearGradient id="go7" x1="0" y1="0" x2="1" y2="0"><stop offset="0" stop-color="#ff8400"/><stop offset=".5" stop-color="#ffe600"/><stop offset="1" stop-color="#ff8400"/></linearGradient></defs><path d="M1.5 .5 H12 L15.5 4 V14.3 L13.6 15.5 L12.2 13.4 L10.6 14.2 L9 13.1 L7.4 14 L5.8 12.9 L4.2 13.8 L2.8 12.9 L1.6 13.9 L.5 13.2 V1.5 Q.5 .5 1.5 .5Z" fill="#fff" stroke="#505050" stroke-width="1"/><path d="M12 .5 V4 H15.5" fill="#f4f4f4" stroke="#505050" stroke-width="1"/><rect x="2" y="3" width="9" height="2.6" fill="#e4e4e4"/><rect x="2" y="5.6" width="11.2" height="5.2" fill="url(#go7)"/><rect x="2" y="5.6" width="11.2" height="1" fill="#ff9a10" opacity=".6"/><rect x="2" y="9.8" width="11.2" height="1" fill="#ff8a00" opacity=".6"/></svg>
<span class="t" style="left:40.7px;top:234.0px;font-size:12px;line-height:19px;color:#000;transform:scaleX(0.8528);">Color for fourth symbol</span>
<div style="position:absolute;left:249px;top:236px;width:13px;height:13px;background:#ffd700;border:1px solid rgba(90,90,90,.55);box-sizing:border-box"></div>
<span class="t" style="left:265.0px;top:234.0px;font-size:12px;line-height:19px;color:#000;transform:scaleX(0.8285);">Gold</span>
<div style="position:absolute;left:19px;top:272px;width:454px;height:1px;background:#c6c6c6"></div>
<svg class="ic" style="left:21px;top:255px" width="16" height="16" viewBox="0 0 16 16"><defs><linearGradient id="go8" x1="0" y1="0" x2="1" y2="0"><stop offset="0" stop-color="#ff8400"/><stop offset=".5" stop-color="#ffe600"/><stop offset="1" stop-color="#ff8400"/></linearGradient></defs><path d="M1.5 .5 H12 L15.5 4 V14.3 L13.6 15.5 L12.2 13.4 L10.6 14.2 L9 13.1 L7.4 14 L5.8 12.9 L4.2 13.8 L2.8 12.9 L1.6 13.9 L.5 13.2 V1.5 Q.5 .5 1.5 .5Z" fill="#fff" stroke="#505050" stroke-width="1"/><path d="M12 .5 V4 H15.5" fill="#f4f4f4" stroke="#505050" stroke-width="1"/><rect x="2" y="3" width="9" height="2.6" fill="#e4e4e4"/><rect x="2" y="5.6" width="11.2" height="5.2" fill="url(#go8)"/><rect x="2" y="5.6" width="11.2" height="1" fill="#ff9a10" opacity=".6"/><rect x="2" y="9.8" width="11.2" height="1" fill="#ff8a00" opacity=".6"/></svg>
<span class="t" style="left:40.7px;top:254.0px;font-size:12px;line-height:19px;color:#000;transform:scaleX(0.8492);">Color for fiifth symbol</span>
<div style="position:absolute;left:249px;top:256px;width:13px;height:13px;background:#00ff00;border:1px solid rgba(90,90,90,.55);box-sizing:border-box"></div>
<span class="t" style="left:265.0px;top:254.0px;font-size:12px;line-height:19px;color:#000;transform:scaleX(0.7882);">Lime</span>
<div style="position:absolute;left:20px;top:273px;width:453px;height:19px;background:#e9e9e9"></div>
<div style="position:absolute;left:19px;top:292px;width:454px;height:1px;background:#c6c6c6"></div>
<svg class="ic" style="left:21px;top:275px" width="16" height="16" viewBox="0 0 16 16"><defs><linearGradient id="go9" x1="0" y1="0" x2="1" y2="0"><stop offset="0" stop-color="#ff8400"/><stop offset=".5" stop-color="#ffe600"/><stop offset="1" stop-color="#ff8400"/></linearGradient></defs><path d="M1.5 .5 H12 L15.5 4 V14.3 L13.6 15.5 L12.2 13.4 L10.6 14.2 L9 13.1 L7.4 14 L5.8 12.9 L4.2 13.8 L2.8 12.9 L1.6 13.9 L.5 13.2 V1.5 Q.5 .5 1.5 .5Z" fill="#fff" stroke="#505050" stroke-width="1"/><path d="M12 .5 V4 H15.5" fill="#f4f4f4" stroke="#505050" stroke-width="1"/><rect x="2" y="3" width="9" height="2.6" fill="#e4e4e4"/><rect x="2" y="5.6" width="11.2" height="5.2" fill="url(#go9)"/><rect x="2" y="5.6" width="11.2" height="1" fill="#ff9a10" opacity=".6"/><rect x="2" y="9.8" width="11.2" height="1" fill="#ff8a00" opacity=".6"/></svg>
<span class="t" style="left:40.7px;top:274.0px;font-size:12px;line-height:19px;color:#000;transform:scaleX(0.8456);">Color for sixt symbol</span>
<div style="position:absolute;left:249px;top:276px;width:13px;height:13px;background:#008000;border:1px solid rgba(90,90,90,.55);box-sizing:border-box"></div>
<span class="t" style="left:265.0px;top:274.0px;font-size:12px;line-height:19px;color:#000;transform:scaleX(0.8396);">Green</span>
<div style="position:absolute;left:19px;top:312px;width:454px;height:1px;background:#c6c6c6"></div>
<svg class="ic" style="left:21px;top:295px" width="16" height="16" viewBox="0 0 16 16"><defs><linearGradient id="go10" x1="0" y1="0" x2="1" y2="0"><stop offset="0" stop-color="#ff8400"/><stop offset=".5" stop-color="#ffe600"/><stop offset="1" stop-color="#ff8400"/></linearGradient></defs><path d="M1.5 .5 H12 L15.5 4 V14.3 L13.6 15.5 L12.2 13.4 L10.6 14.2 L9 13.1 L7.4 14 L5.8 12.9 L4.2 13.8 L2.8 12.9 L1.6 13.9 L.5 13.2 V1.5 Q.5 .5 1.5 .5Z" fill="#fff" stroke="#505050" stroke-width="1"/><path d="M12 .5 V4 H15.5" fill="#f4f4f4" stroke="#505050" stroke-width="1"/><rect x="2" y="3" width="9" height="2.6" fill="#e4e4e4"/><rect x="2" y="5.6" width="11.2" height="5.2" fill="url(#go10)"/><rect x="2" y="5.6" width="11.2" height="1" fill="#ff9a10" opacity=".6"/><rect x="2" y="9.8" width="11.2" height="1" fill="#ff8a00" opacity=".6"/></svg>
<span class="t" style="left:40.7px;top:294.0px;font-size:12px;line-height:19px;color:#000;transform:scaleX(0.8643);">Color for seventh symbol</span>
<div style="position:absolute;left:249px;top:296px;width:13px;height:13px;background:#1e90ff;border:1px solid rgba(90,90,90,.55);box-sizing:border-box"></div>
<span class="t" style="left:265.0px;top:294.0px;font-size:12px;line-height:19px;color:#000;transform:scaleX(0.8679);">DodgerBlue</span>
<div style="position:absolute;left:20px;top:313px;width:453px;height:19px;background:#e9e9e9"></div>
<div style="position:absolute;left:19px;top:332px;width:454px;height:1px;background:#c6c6c6"></div>
<svg class="ic" style="left:21px;top:315px" width="16" height="16" viewBox="0 0 16 16"><defs><linearGradient id="go11" x1="0" y1="0" x2="1" y2="0"><stop offset="0" stop-color="#ff8400"/><stop offset=".5" stop-color="#ffe600"/><stop offset="1" stop-color="#ff8400"/></linearGradient></defs><path d="M1.5 .5 H12 L15.5 4 V14.3 L13.6 15.5 L12.2 13.4 L10.6 14.2 L9 13.1 L7.4 14 L5.8 12.9 L4.2 13.8 L2.8 12.9 L1.6 13.9 L.5 13.2 V1.5 Q.5 .5 1.5 .5Z" fill="#fff" stroke="#505050" stroke-width="1"/><path d="M12 .5 V4 H15.5" fill="#f4f4f4" stroke="#505050" stroke-width="1"/><rect x="2" y="3" width="9" height="2.6" fill="#e4e4e4"/><rect x="2" y="5.6" width="11.2" height="5.2" fill="url(#go11)"/><rect x="2" y="5.6" width="11.2" height="1" fill="#ff9a10" opacity=".6"/><rect x="2" y="9.8" width="11.2" height="1" fill="#ff8a00" opacity=".6"/></svg>
<span class="t" style="left:40.7px;top:314.0px;font-size:12px;line-height:19px;color:#000;transform:scaleX(0.8543);">Color for eight symbol</span>
<div style="position:absolute;left:249px;top:316px;width:13px;height:13px;background:#0000ff;border:1px solid rgba(90,90,90,.55);box-sizing:border-box"></div>
<span class="t" style="left:265.0px;top:314.0px;font-size:12px;line-height:19px;color:#000;transform:scaleX(0.8327);">Blue</span>
<div style="position:absolute;left:19px;top:352px;width:454px;height:1px;background:#c6c6c6"></div>
<svg class="ic" style="left:21px;top:335px" width="16" height="16" viewBox="0 0 16 16"><defs><linearGradient id="go12" x1="0" y1="0" x2="1" y2="0"><stop offset="0" stop-color="#ff8400"/><stop offset=".5" stop-color="#ffe600"/><stop offset="1" stop-color="#ff8400"/></linearGradient></defs><path d="M1.5 .5 H12 L15.5 4 V14.3 L13.6 15.5 L12.2 13.4 L10.6 14.2 L9 13.1 L7.4 14 L5.8 12.9 L4.2 13.8 L2.8 12.9 L1.6 13.9 L.5 13.2 V1.5 Q.5 .5 1.5 .5Z" fill="#fff" stroke="#505050" stroke-width="1"/><path d="M12 .5 V4 H15.5" fill="#f4f4f4" stroke="#505050" stroke-width="1"/><rect x="2" y="3" width="9" height="2.6" fill="#e4e4e4"/><rect x="2" y="5.6" width="11.2" height="5.2" fill="url(#go12)"/><rect x="2" y="5.6" width="11.2" height="1" fill="#ff9a10" opacity=".6"/><rect x="2" y="9.8" width="11.2" height="1" fill="#ff8a00" opacity=".6"/></svg>
<span class="t" style="left:40.7px;top:334.0px;font-size:12px;line-height:19px;color:#000;transform:scaleX(0.8543);">Color for ninth symbol</span>
<div style="position:absolute;left:249px;top:336px;width:13px;height:13px;background:#da70d6;border:1px solid rgba(90,90,90,.55);box-sizing:border-box"></div>
<span class="t" style="left:265.0px;top:334.0px;font-size:12px;line-height:19px;color:#000;transform:scaleX(0.8489);">Orchid</span>
<div style="position:absolute;left:20px;top:353px;width:453px;height:19px;background:#e9e9e9"></div>
<div style="position:absolute;left:19px;top:372px;width:454px;height:1px;background:#c6c6c6"></div>
<svg class="ic" style="left:21px;top:355px" width="16" height="16" viewBox="0 0 16 16"><defs><linearGradient id="go13" x1="0" y1="0" x2="1" y2="0"><stop offset="0" stop-color="#ff8400"/><stop offset=".5" stop-color="#ffe600"/><stop offset="1" stop-color="#ff8400"/></linearGradient></defs><path d="M1.5 .5 H12 L15.5 4 V14.3 L13.6 15.5 L12.2 13.4 L10.6 14.2 L9 13.1 L7.4 14 L5.8 12.9 L4.2 13.8 L2.8 12.9 L1.6 13.9 L.5 13.2 V1.5 Q.5 .5 1.5 .5Z" fill="#fff" stroke="#505050" stroke-width="1"/><path d="M12 .5 V4 H15.5" fill="#f4f4f4" stroke="#505050" stroke-width="1"/><rect x="2" y="3" width="9" height="2.6" fill="#e4e4e4"/><rect x="2" y="5.6" width="11.2" height="5.2" fill="url(#go13)"/><rect x="2" y="5.6" width="11.2" height="1" fill="#ff9a10" opacity=".6"/><rect x="2" y="9.8" width="11.2" height="1" fill="#ff8a00" opacity=".6"/></svg>
<span class="t" style="left:40.7px;top:354.0px;font-size:12px;line-height:19px;color:#000;transform:scaleX(0.8562);">Color for tenth symbol</span>
<div style="position:absolute;left:249px;top:356px;width:13px;height:13px;background:#808000;border:1px solid rgba(90,90,90,.55);box-sizing:border-box"></div>
<span class="t" style="left:265.0px;top:354.0px;font-size:12px;line-height:19px;color:#000;transform:scaleX(0.8413);">Olive</span>
<div style="position:absolute;left:19px;top:392px;width:454px;height:1px;background:#c6c6c6"></div>
<svg class="ic" style="left:21px;top:375px" width="16" height="16" viewBox="0 0 16 16"><defs><linearGradient id="gy14" x1="0" y1="0" x2="1" y2="1"><stop offset="0" stop-color="#fbf3b0"/><stop offset="1" stop-color="#e3d45c"/></linearGradient></defs><path d="M1.5 .5 H12 L15.5 4 V14.3 L13.6 15.5 L12.2 13.4 L10.6 14.2 L9 13.1 L7.4 14 L5.8 12.9 L4.2 13.8 L2.8 12.9 L1.6 13.9 L.5 13.2 V1.5 Q.5 .5 1.5 .5Z" fill="url(#gy14)" stroke="#c6b652" stroke-width="1"/><path d="M12 .5 V4 H15.5" fill="#fdf8d0" stroke="#c6b652" stroke-width="1"/><text x="7" y="11.2" text-anchor="middle" style="font-family:'Liberation Sans',sans-serif" font-size="9.5" fill="#3a3400" stroke="#3a3400" stroke-width=".25" textLength="10" lengthAdjust="spacingAndGlyphs">ab</text></svg>
<span class="t" style="left:41.4px;top:374.0px;font-size:12px;line-height:19px;color:#000;transform:scaleX(0.8715);">Unique ID</span>
<span class="t" style="left:249.0px;top:374.0px;font-size:12px;line-height:19px;color:#000;transform:scaleX(0.8519);">Correlation</span>
<div style="position:absolute;left:20px;top:393px;width:453px;height:19px;background:#e9e9e9"></div>
<div style="position:absolute;left:19px;top:412px;width:454px;height:1px;background:#c6c6c6"></div>
<svg class="ic" style="left:21px;top:395px" width="16" height="16" viewBox="0 0 16 16"><defs><linearGradient id="gb15" x1="0" y1="0" x2="1" y2="1"><stop offset="0" stop-color="#cde8fa"/><stop offset="1" stop-color="#62a6dc"/></linearGradient></defs><path d="M1.5 .5 H12 L15.5 4 V14.3 L13.6 15.5 L12.2 13.4 L10.6 14.2 L9 13.1 L7.4 14 L5.8 12.9 L4.2 13.8 L2.8 12.9 L1.6 13.9 L.5 13.2 V1.5 Q.5 .5 1.5 .5Z" fill="url(#gb15)" stroke="#6f9fcb" stroke-width="1"/><path d="M12 .5 V4 H15.5" fill="#e2f1fb" stroke="#6f9fcb" stroke-width="1"/><g fill="#0f3566" shape-rendering="crispEdges"><rect x="3" y="6" width="1" height="1"/><rect x="2" y="7" width="1" height="1"/><rect x="3" y="7" width="1" height="1"/><rect x="3" y="8" width="1" height="1"/><rect x="3" y="9" width="1" height="1"/><rect x="3" y="10" width="1" height="1"/><rect x="5" y="6" width="1" height="1"/><rect x="6" y="6" width="1" height="1"/><rect x="7" y="6" width="1" height="1"/><rect x="7" y="7" width="1" height="1"/><rect x="5" y="8" width="1" height="1"/><rect x="6" y="8" width="1" height="1"/><rect x="7" y="8" width="1" height="1"/><rect x="5" y="9" width="1" height="1"/><rect x="5" y="10" width="1" height="1"/><rect x="6" y="10" width="1" height="1"/><rect x="7" y="10" width="1" height="1"/><rect x="9" y="6" width="1" height="1"/><rect x="10" y="6" width="1" height="1"/><rect x="11" y="6" width="1" height="1"/><rect x="11" y="7" width="1" height="1"/><rect x="10" y="8" width="1" height="1"/><rect x="11" y="8" width="1" height="1"/><rect x="11" y="9" width="1" height="1"/><rect x="9" y="10" width="1" height="1"/><rect x="10" y="10" width="1" height="1"/><rect x="11" y="10" width="1" height="1"/></g></svg>
<span class="t" style="left:41.4px;top:394.0px;font-size:12px;line-height:19px;color:#000;transform:scaleX(0.8562);">Lines width</span>
<span class="t" style="left:249.0px;top:394.0px;font-size:12px;line-height:19px;color:#000;transform:scaleX(0.8692);">2</span>
<div style="position:absolute;left:245px;top:92px;width:1px;height:321px;background:#cfcfcf"></div>
<div style="position:absolute;left:483px;top:375px;width:103px;height:21px;background:#e1e1e1;border:1px solid #adadad;box-sizing:border-box"></div>
<span class="t" style="left:523.1px;top:376.7px;font-size:12px;line-height:19px;color:#000;transform:scaleX(0.8542);">Load</span>
<div style="position:absolute;left:483px;top:408px;width:103px;height:21px;background:#e1e1e1;border:1px solid #adadad;box-sizing:border-box"></div>
<span class="t" style="left:522.7px;top:409.7px;font-size:12px;line-height:19px;color:#000;transform:scaleX(0.8629);">Save</span>
<div style="position:absolute;left:359px;top:446px;width:73px;height:21px;background:#e1e1e1;border:2px solid #0078d7;box-sizing:border-box"></div>
<span class="t" style="left:387.2px;top:447.7px;font-size:12px;line-height:19px;color:#000;transform:scaleX(0.9517);">OK</span>
<div style="position:absolute;left:440px;top:446px;width:73px;height:21px;background:#e1e1e1;border:1px solid #adadad;box-sizing:border-box"></div>
<span class="t" style="left:460.1px;top:447.7px;font-size:12px;line-height:19px;color:#000;transform:scaleX(0.8781);">Cancel</span>
<div style="position:absolute;left:521px;top:446px;width:73px;height:21px;background:#e1e1e1;border:1px solid #adadad;box-sizing:border-box"></div>
<span class="t" style="left:544.1px;top:447.7px;font-size:12px;line-height:19px;color:#000;transform:scaleX(0.8518);">Reset</span>
<div style="position:absolute;left:599px;top:466px;width:2px;height:2px;background:#bfbfbf"></div>
<div style="position:absolute;left:596px;top:469px;width:2px;height:2px;background:#bfbfbf"></div>
<div style="position:absolute;left:599px;top:469px;width:2px;height:2px;background:#bfbfbf"></div>
<div style="position:absolute;left:593px;top:472px;width:2px;height:2px;background:#bfbfbf"></div>
<div style="position:absolute;left:596px;top:472px;width:2px;height:2px;background:#bfbfbf"></div>
<div style="position:absolute;left:599px;top:472px;width:2px;height:2px;background:#bfbfbf"></div>
</div>
</body></html>
